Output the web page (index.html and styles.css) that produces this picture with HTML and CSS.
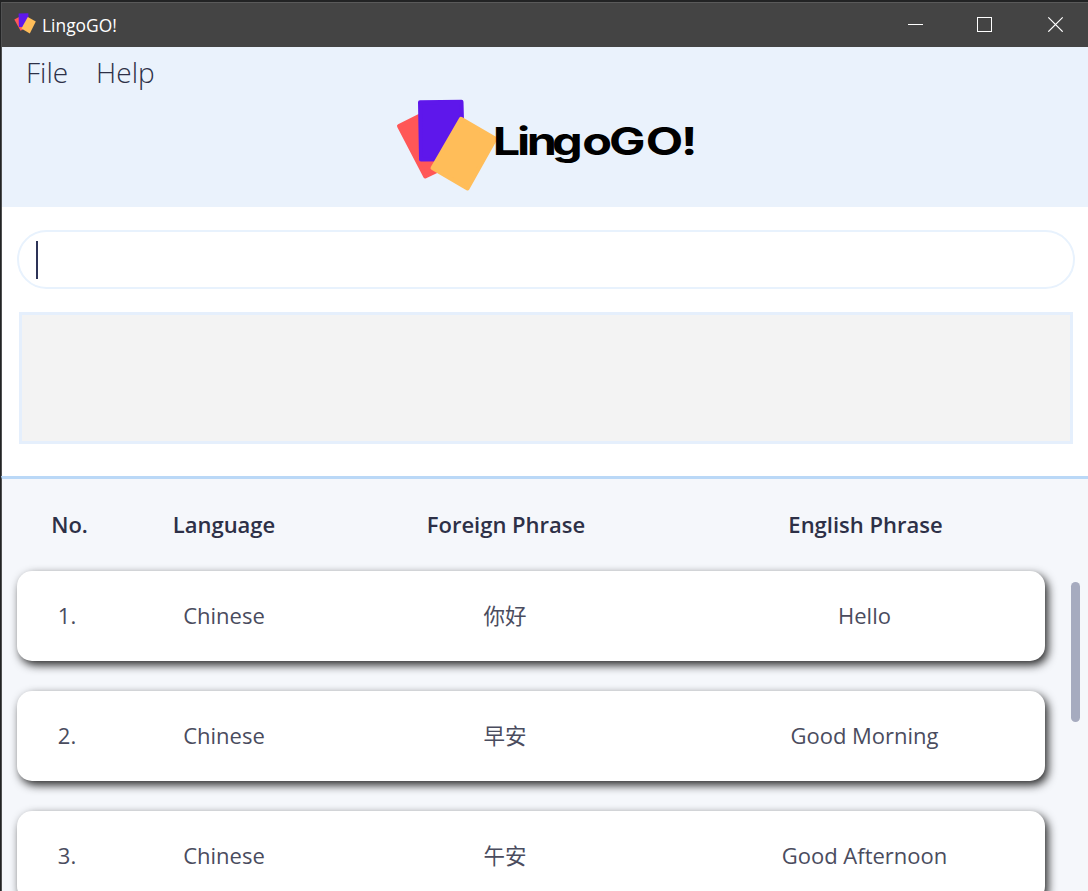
FILE: index.html
```html
<!DOCTYPE html>
<html lang="en">
<head>
<meta charset="utf-8">
<title>LingoGO!</title>
<link rel="stylesheet" href="styles.css">
</head>
<body>
<div class="window">
  <header class="titlebar">
    <svg class="app-icon" width="22" height="22" viewBox="0 0 22 22">
      <path d="M0.3 6.5 L5 4 L11 15.5 L6.5 17.8 Z" fill="#ff5757"/>
      <path d="M4.6 0.6 L14.4 0.2 L14.4 14 L4.9 14 Z" fill="#5e17eb"/>
      <path d="M13.8 4 L21.8 8.6 L15.8 20.4 L7.4 15.4 Z" fill="#ffbd59"/>
    </svg>
    <span class="app-title">LingoGO!</span>
    <svg class="controls" width="158" height="16" viewBox="0 0 158 16" fill="none" stroke="#fff">
      <path d="M0 8.5H15" shape-rendering="crispEdges"/>
      <rect x="69.5" y="1.5" width="14" height="14" shape-rendering="crispEdges"/>
      <path d="M140.3 1.3L154.7 15.7M154.7 1.3L140.3 15.7" stroke-width="1.2"/>
    </svg>
  </header>
  <section class="banner">
    <nav class="menu"><span>File</span><span>Help</span></nav>
    <svg class="logo" width="324" height="96" viewBox="384 97 324 96">
      <g stroke-width="4" stroke-linejoin="round">
        <path d="M399 126L420 115.5L441 169L425.3 176.5Z" fill="#ff5757" stroke="#ff5757"/>
        <path d="M420 102.2L461.5 101.7L463 159.3L421 159.5Z" fill="#5e17eb" stroke="#5e17eb"/>
        <path d="M461 118.8L495.4 138.8L467.5 188.5L432.5 168Z" fill="#ffbd59" stroke="#ffbd59"/>
      </g>
      <text class="wordmark" transform="translate(492.8 155) scale(1.28 1)" x="0 18.9 26.6 46.2 69.8 90.8 119.5 147">LingoGO!</text>
    </svg>
  </section>
  <section class="console">
    <div class="command"><span class="caret"></span></div>
    <div class="result"></div>
  </section>
  <main class="phrases">
    <div class="row heading"><span>No.</span><span>Language</span><span>Foreign Phrase</span><span>English Phrase</span></div>
    <div class="body">
      <div class="list">
        <div class="row card"><span>1.</span><span>Chinese</span><span class="zh" lang="zh">你好</span><span>Hello</span></div>
        <div class="row card"><span>2.</span><span>Chinese</span><span class="zh" lang="zh">早安</span><span>Good Morning</span></div>
        <div class="row card"><span>3.</span><span>Chinese</span><span class="zh" lang="zh">午安</span><span>Good Afternoon</span></div>
      </div>
      <div class="scrollbar"></div>
    </div>
  </main>
</div>
</body>
</html>
```
FILE: styles.css
```css
* { box-sizing: border-box; }
body {
  margin: 0;
  height: 891px;
  overflow: hidden;
  background: #222324;
  font-family: "Open Sans", "Noto Sans CJK SC", sans-serif;
}
.window {
  display: flex;
  flex-direction: column;
  height: 891px;
  padding-top: 2px;
  border-left: 1px solid #222324;
  overflow: hidden;
}
.window > * { border-left: 1px solid #505152; }
.titlebar {
  display: flex;
  align-items: center;
  flex: none;
  height: 45px;
  padding: 0 22px 0 12px;
  background: #444;
  border-top: 1px solid #5a5a5a;
  color: #fff;
}
.app-icon { margin-bottom: 2px; }
.app-title {
  margin: 0 auto 0 6px;
  font-size: 17.4px;
  line-height: 24px;
}
.controls { margin-bottom: 3px; }
.banner {
  display: flex;
  flex-direction: column;
  flex: none;
  height: 160px;
  background: #eaf2fc;
}
.menu {
  display: flex;
  gap: 28px;
  height: 50px;
  padding: 5px 24px 0;
  color: #2d3047;
  font-size: 28px;
  font-weight: 300;
  line-height: 40px;
}
.logo { align-self: center; margin-left: 2px; }
.wordmark {
  font-family: Inter, sans-serif;
  font-size: 38px;
  font-weight: 700;
}
.console {
  flex: none;
  height: 269px;
  padding: 23px 13px 0 15px;
  background: #fff;
}
.command {
  height: 59px;
  padding: 11px 17px;
  border: 2px solid #e8f2fd;
  border-radius: 30px;
}
.caret {
  display: block;
  width: 2px;
  height: 38px;
  margin-top: -2px;
  background: #2d3357;
}
.result {
  height: 132px;
  margin: 23px 2px 0;
  border: 3px solid #e5effc;
  background: #f3f3f3;
}
.phrases {
  display: flex;
  flex-direction: column;
  flex: 1;
  min-height: 0;
  border-top: 3px solid #bad8f7;
  background: #f5f7fb;
}
.row {
  display: grid;
  grid-template-columns: 105px 204px 358px 361px;
  align-items: center;
  text-align: center;
}
.heading {
  flex: none;
  height: 92px;
  margin-left: 15px;
  padding-bottom: 2px;
  color: #2d3047;
  font-size: 22px;
  font-weight: 600;
}
.heading span:nth-child(n+3) { padding-left: 2px; }
.body {
  display: flex;
  justify-content: space-between;
  padding: 0 8px 0 15px;
}
.list {
  display: flex;
  flex-direction: column;
  gap: 30px;
  width: 1028px;
}
.card {
  height: 90px;
  padding-bottom: 2px;
  border-radius: 15px;
  background: #fff;
  box-shadow: 3px 4px 10px rgba(0, 0, 0, 0.85);
  color: #4a4c5e;
  font-size: 22px;
}
.card span:first-child { padding-right: 5px; }
.zh {
  padding-bottom: 1px;
  font-size: 21.5px;
}
.scrollbar {
  width: 9px;
  height: 140px;
  margin-top: 11px;
  border-radius: 5px;
  background: #a6abbf;
}
```
